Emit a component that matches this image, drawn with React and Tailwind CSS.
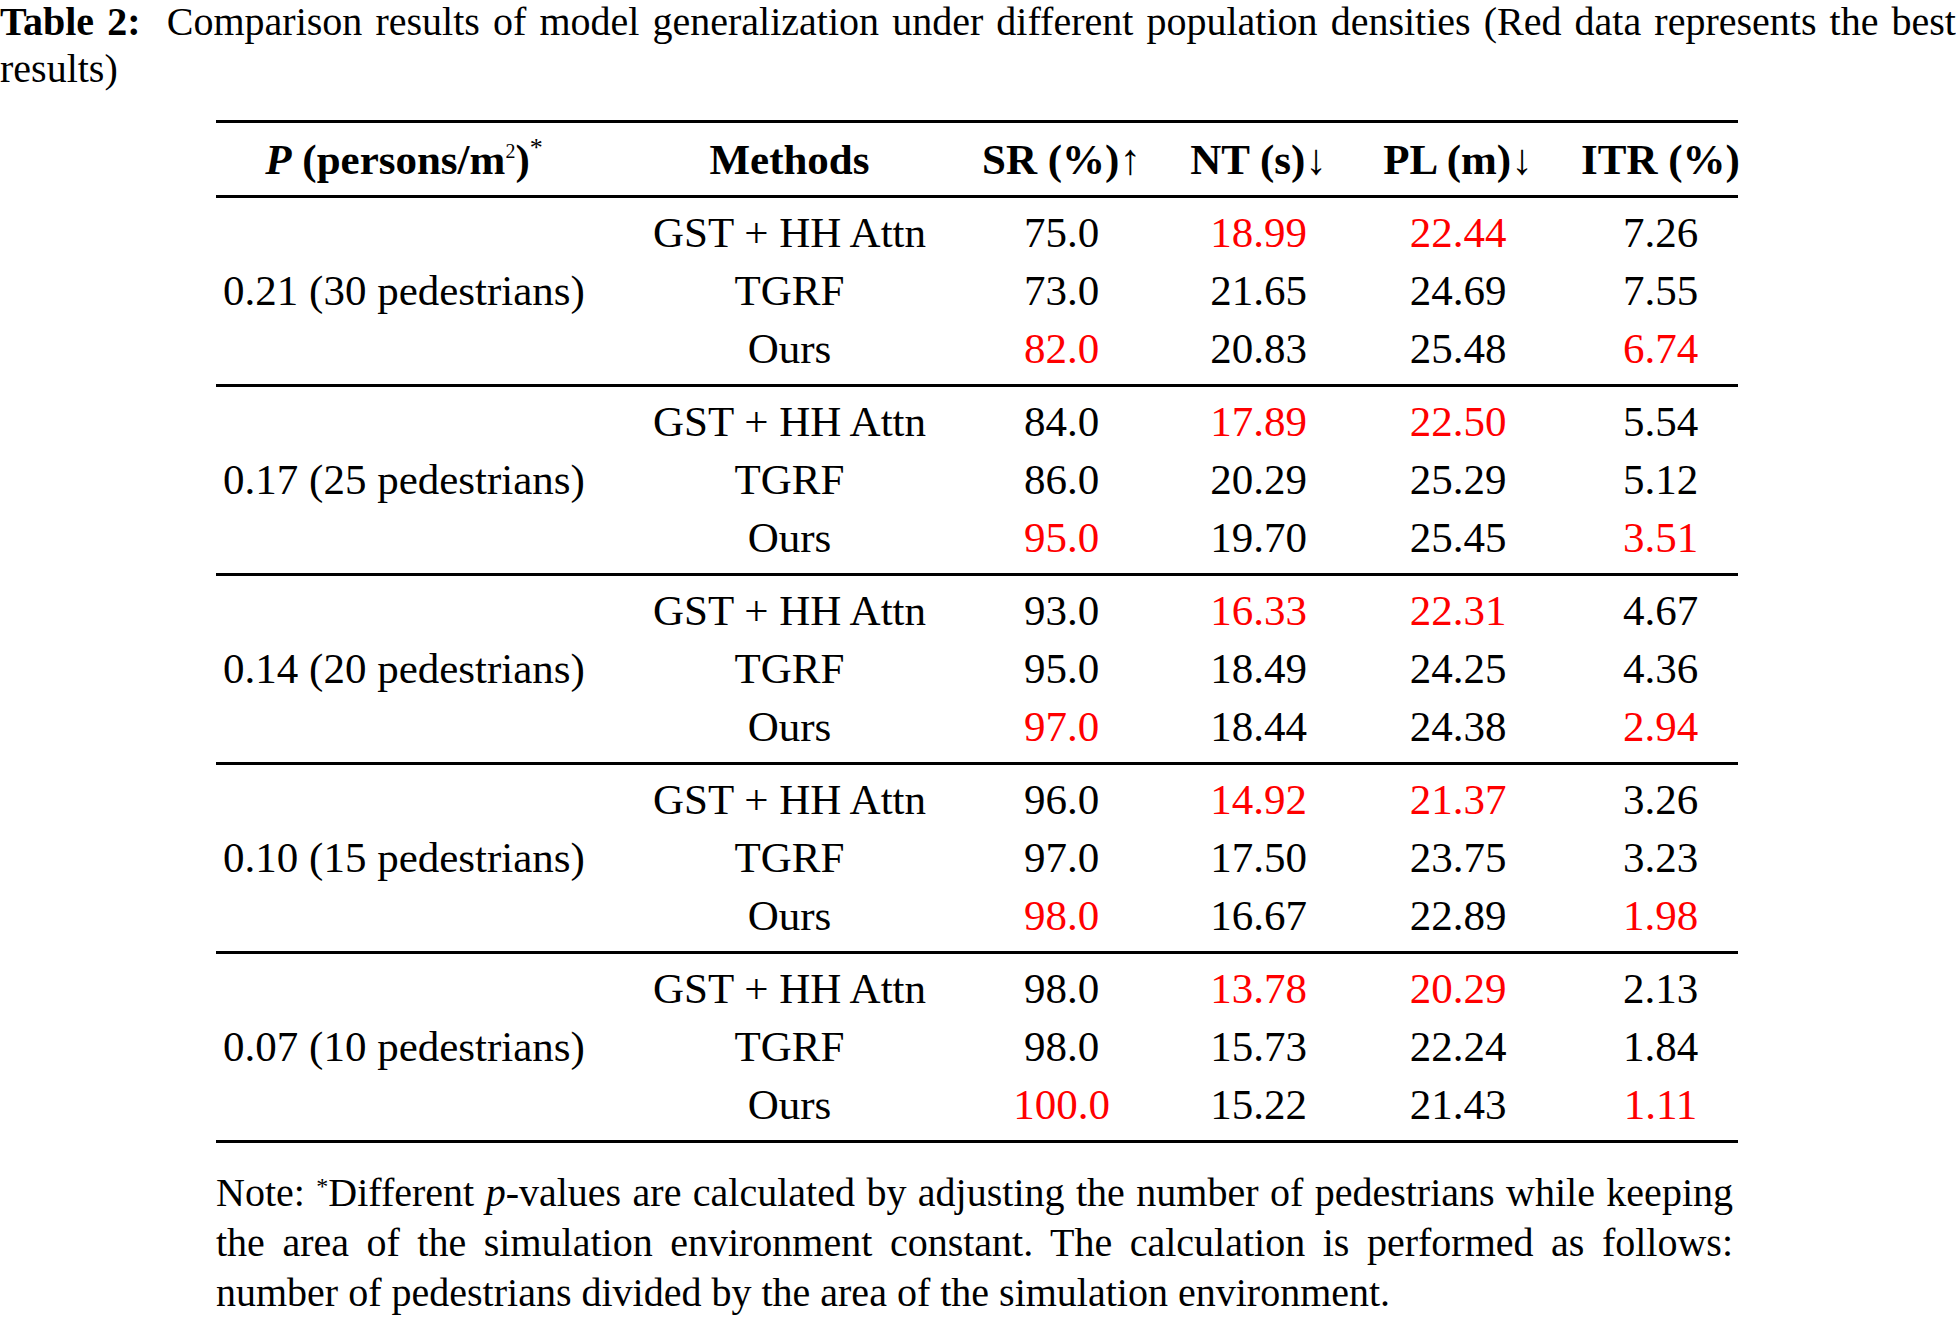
import React from "react";

const GROUPS = [
  {
    p: "0.21 (30 pedestrians)",
    rows: [
      ["GST + HH Attn", "75.0", "18.99*", "22.44*", "7.26"],
      ["TGRF", "73.0", "21.65", "24.69", "7.55"],
      ["Ours", "82.0*", "20.83", "25.48", "6.74*"],
    ],
  },
  {
    p: "0.17 (25 pedestrians)",
    rows: [
      ["GST + HH Attn", "84.0", "17.89*", "22.50*", "5.54"],
      ["TGRF", "86.0", "20.29", "25.29", "5.12"],
      ["Ours", "95.0*", "19.70", "25.45", "3.51*"],
    ],
  },
  {
    p: "0.14 (20 pedestrians)",
    rows: [
      ["GST + HH Attn", "93.0", "16.33*", "22.31*", "4.67"],
      ["TGRF", "95.0", "18.49", "24.25", "4.36"],
      ["Ours", "97.0*", "18.44", "24.38", "2.94*"],
    ],
  },
  {
    p: "0.10 (15 pedestrians)",
    rows: [
      ["GST + HH Attn", "96.0", "14.92*", "21.37*", "3.26"],
      ["TGRF", "97.0", "17.50", "23.75", "3.23"],
      ["Ours", "98.0*", "16.67", "22.89", "1.98*"],
    ],
  },
  {
    p: "0.07 (10 pedestrians)",
    rows: [
      ["GST + HH Attn", "98.0", "13.78*", "20.29*", "2.13"],
      ["TGRF", "98.0", "15.73", "22.24", "1.84"],
      ["Ours", "100.0*", "15.22", "21.43", "1.11*"],
    ],
  },
];

// a trailing * marks the best value (shown in red)
function Val({ v }) {
  const best = v.endsWith("*");
  return <span className={best ? "text-[#f00]" : ""}>{best ? v.slice(0, -1) : v}</span>;
}

const COLS = "grid grid-cols-[376px_395px_149px_245px_154px_203px]";
const CELL = "flex items-center justify-center whitespace-nowrap";
const Rule = () => <div className="h-[3px] bg-black" />;

export default function App() {
  return (
    <div className="w-[1956px] h-[1317px] overflow-hidden bg-white text-black font-['Liberation_Serif',serif]">
      {/* Caption */}
      <div className="text-[40px]">
        <p className="leading-[44px] text-justify [text-align-last:justify]">
          <span className="font-bold">Table 2:</span>&nbsp; Comparison results of model generalization under different population densities (Red data represents the best
        </p>
        <p className="leading-[50px]">results)</p>
      </div>

      {/* Table */}
      <div className="ml-[216px] w-[1522px] mt-[26px] text-[43px]">
        <Rule />
        <div className={`${COLS} h-[72px] pt-[3px] font-bold`}>
          <div className={CELL}>
            <i>P</i>&nbsp;(persons/m<sup className="text-[20px] font-normal">2</sup>)<sup className="text-[26px] font-normal">*</sup>
          </div>
          <div className={CELL}>Methods</div>
          <div className={CELL}>SR (%)<span className="font-normal">↑</span></div>
          <div className={CELL}>NT (s)<span className="font-normal">↓</span></div>
          <div className={CELL}>PL (m)<span className="font-normal">↓</span></div>
          <div className={`${CELL} pl-[48px]`}>ITR (%)</div>
        </div>
        <Rule />
        {GROUPS.map(g => (
          <div key={g.p}>
            <div className={`${COLS} py-[6px]`}>
              <div className={`${CELL} row-span-3`}>{g.p}</div>
              {g.rows.map(r => (
                <React.Fragment key={r[0]}>
                  <div className={`${CELL} h-[58px]`}>{r[0]}</div>
                  <div className={`${CELL} h-[58px]`}><Val v={r[1]} /></div>
                  <div className={`${CELL} h-[58px]`}><Val v={r[2]} /></div>
                  <div className={`${CELL} h-[58px]`}><Val v={r[3]} /></div>
                  <div className={`${CELL} h-[58px] pl-[48px]`}><Val v={r[4]} /></div>
                </React.Fragment>
              ))}
            </div>
            <Rule />
          </div>
        ))}

        {/* Note */}
        <div className="mt-[25px] text-[40px] leading-[50px] w-[1517px]">
          <p className="text-justify [text-align-last:justify]">
            Note: <sup className="text-[24px]">*</sup>Different <i>p</i>-values are calculated by adjusting the number of pedestrians while keeping
          </p>
          <p className="text-justify [text-align-last:justify]">
            the area of the simulation environment constant. The calculation is performed as follows:
          </p>
          <p>number of pedestrians divided by the area of the simulation environment.</p>
        </div>
      </div>
    </div>
  );
}
